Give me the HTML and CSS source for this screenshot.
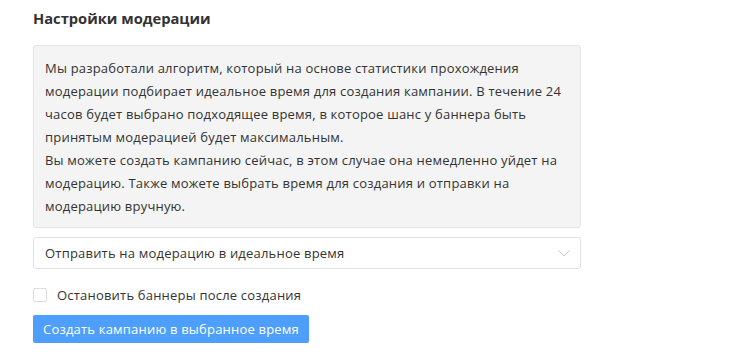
FILE: index.html
```html
<!DOCTYPE html>
<html lang="ru">
<head>
<meta charset="utf-8">
<link rel="stylesheet" href="styles.css">
</head>
<body>
<div class="panel">
  <h2 class="title">Настройки модерации</h2>
  <div class="info">
    <p>Мы разработали алгоритм, который на основе статистики прохождения модерации подбирает идеальное время для создания кампании. В течение 24 часов будет выбрано подходящее время, в которое шанс у баннера быть принятым модерацией будет максимальным.</p>
    <p>Вы можете создать кампанию сейчас, в этом случае она немедленно уйдет на модерацию. Также можете выбрать время для создания и отправки на модерацию вручную.</p>
  </div>
  <div class="select">
    <span class="select-text">Отправить на модерацию в идеальное время</span>
    <svg class="chevron" width="12" height="7" viewBox="0 0 12 7"><path d="M0.5 0.5 L6 6 L11.5 0.5" fill="none" stroke="#c9c9cf" stroke-width="1"/></svg>
  </div>
  <label class="check">
    <span class="box"></span>
    <span class="check-label">Остановить баннеры после создания</span>
  </label>
  <button class="btn">Создать кампанию в выбранное время</button>
</div>
</body>
</html>
```
FILE: styles.css
```css
html, body { margin: 0; padding: 0; background: #fff; }
body { font-family: "Open Sans", "Noto Sans", sans-serif; color: #333; }
.panel { padding: 8px 0 0 33px; width: 548px; display: flex; flex-direction: column; }
.title { margin: 0; font-size: 14.7px; font-weight: 700; line-height: 20px; color: #333; }
.info { margin-top: 17px; background: #f4f4f4; border: 1px solid #e4e4e4; border-radius: 3px; padding: 11px 11px 9px; font-size: 13px; letter-spacing: 0.2px; line-height: 23px; color: #333; }
.info p { margin: 0; }
.select { margin-top: 9px; height: 30px; border: 1px solid #e2e2e6; border-radius: 3px; display: flex; align-items: center; justify-content: space-between; padding: 0 10px 0 11px; font-size: 13px; letter-spacing: 0.2px; color: #333; }
.chevron { display: block; }
.check { margin-top: 18px; display: flex; align-items: center; gap: 10px; font-size: 13px; letter-spacing: 0.2px; color: #333; height: 16px; }
.box { width: 14px; height: 14px; border: 1px solid #dcdce0; border-radius: 2px; box-sizing: border-box; background: #fff; }
.btn { margin-top: 12px; align-self: flex-start; height: 28px; padding: 0 10px; background: #4d9ffb; color: #fff; border: 0; border-radius: 2px; font-family: inherit; font-size: 13px; letter-spacing: 0.2px; cursor: pointer; }
```
